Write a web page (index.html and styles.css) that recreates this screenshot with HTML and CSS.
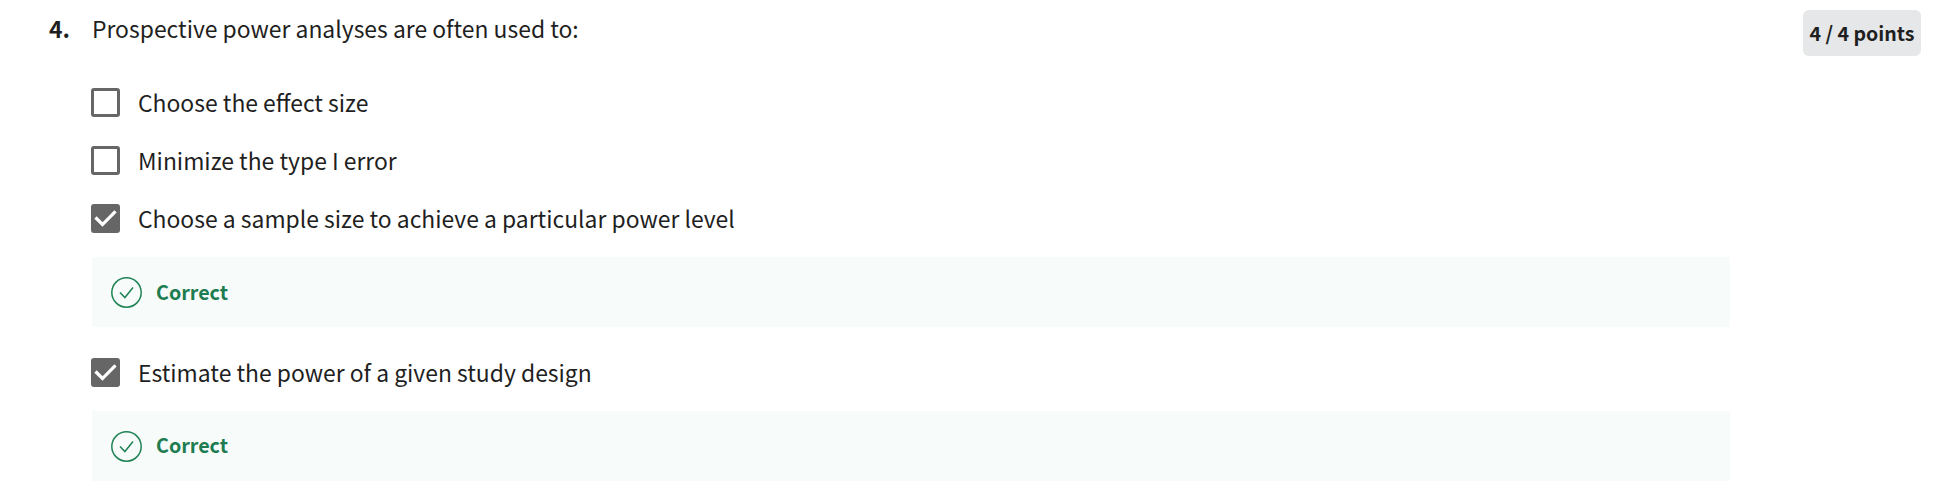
FILE: index.html
```html
<!DOCTYPE html>
<html lang="en">
<head>
<meta charset="utf-8">
<title>Quiz question 4</title>
<link rel="stylesheet" href="styles.css">
</head>
<body>
<main class="question">
  <div class="number">4.</div>
  <section class="content">
    <h1 class="prompt">Prospective power analyses are often used to:</h1>
    <div class="option"><span class="box"></span><span class="label">Choose the effect size</span></div>
    <div class="option"><span class="box"></span><span class="label">Minimize the type I error</span></div>
    <div class="option">
      <span class="box checked"><svg class="tick" viewBox="0 0 29 29"><path d="M4.5 13.5L11.5 20.5L24.5 7.3"/></svg></span>
      <span class="label">Choose a sample size to achieve a particular power level</span>
    </div>
    <div class="feedback">
      <svg class="status" viewBox="0 0 31 31"><circle cx="15.5" cy="15.5" r="14.7"/><path d="M9 15.5L13.9 20.5L22 10.5"/></svg>
      <span class="verdict">Correct</span>
    </div>
    <div class="option">
      <span class="box checked"><svg class="tick" viewBox="0 0 29 29"><path d="M4.5 13.5L11.5 20.5L24.5 7.3"/></svg></span>
      <span class="label">Estimate the power of a given study design</span>
    </div>
    <div class="feedback">
      <svg class="status" viewBox="0 0 31 31"><circle cx="15.5" cy="15.5" r="14.7"/><path d="M9 15.5L13.9 20.5L22 10.5"/></svg>
      <span class="verdict verdict-last">Correct</span>
    </div>
  </section>
  <div class="points">4 / 4 points</div>
</main>
</body>
</html>
```
FILE: styles.css
```css
body {
  margin: 0;
  background: #fff;
  color: #1f1f1f;
  font-family: "Noto Sans CJK SC", "Noto Sans", sans-serif;
  font-size: 22.9px;
  line-height: 34px;
}
.question {
  box-sizing: border-box;
  display: grid;
  grid-template-columns: 43px 1711px 118px;
  justify-content: start;
  align-items: start;
  height: 495px;
  padding: 10px 16px 0 49px;
}
.content { width: 1638px; }
.number { font-weight: 700; padding-top: 1px; }
.prompt {
  margin: 0;
  padding: 1px 0 28px;
  font-size: inherit;
  font-weight: 400;
}
.option {
  display: flex;
  align-items: center;
  gap: 18px;
  height: 58px;
  margin-left: -1px;
}
.box {
  box-sizing: border-box;
  flex: none;
  width: 29px;
  height: 29px;
  border: 3px solid #666;
  border-radius: 3px;
}
.checked { border: 0; background: #666; }
.tick { display: block; fill: none; stroke: #fff; stroke-width: 3.2; }
.feedback {
  display: flex;
  align-items: center;
  gap: 14px;
  box-sizing: border-box;
  height: 70px;
  margin: 10px 0 16px;
  padding: 0 0 0 19px;
  background: #f7fbfa;
}
.status {
  width: 31px;
  height: 31px;
  fill: none;
  stroke: #1f8354;
  stroke-width: 1.5;
}
.verdict { margin-top: -1px; color: #1d7c50; font-size: 19.7px; font-weight: 700; }
.verdict-last { margin-top: -3px; }
.points {
  width: 118px;
  height: 46px;
  line-height: 45px;
  border-radius: 6px;
  background: #e5e7e8;
  text-align: center;
  font-size: 19.6px;
  font-weight: 700;
}
```
